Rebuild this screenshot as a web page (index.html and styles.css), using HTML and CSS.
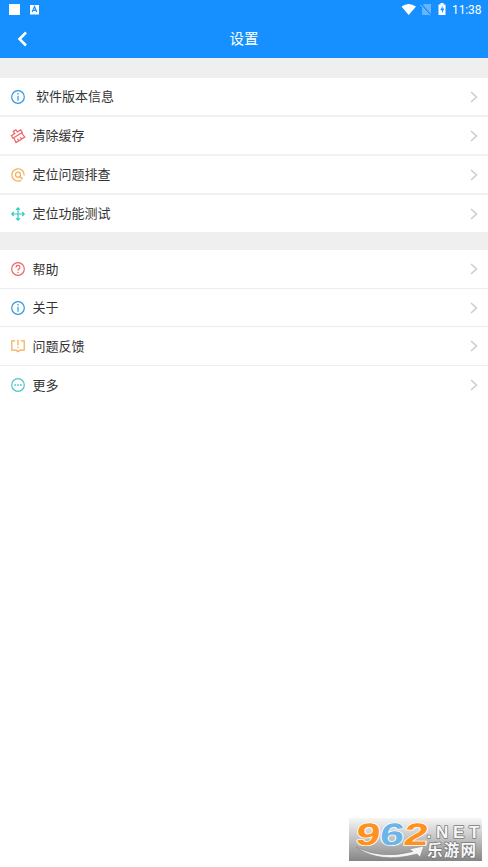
FILE: index.html
```html
<!DOCTYPE html>
<html lang="zh-CN">
<head>
<meta charset="utf-8">
<title>设置</title>
<link rel="stylesheet" href="styles.css">
</head>
<body>
<header class="header">
  <div class="status">
    <svg width="40" height="19" viewBox="0 0 40 19"><path fill="#fff" d="M9 4h11v11H9zM30 5h9v9.500h-9z"/><path d="M32.200 12l2.300-5.500 2.300 5.500M33 10.300h3" fill="none" stroke="#1690ff" stroke-width="1.200"/></svg>
    <div class="status-right">
      <svg width="48" height="19" viewBox="0 0 48 19"><path fill="#fff" d="M.5 6.500Q7.500 1.500 15 6.500L7.700 15z"/><path fill="#64b4ff" d="M23 4h7v11h-9V6z"/><path d="M19.500 4L30 15.500" stroke="#1690ff" stroke-width="2"/><path d="M19.500 5L29 15.500" stroke="#8bc8ff"/><path fill="#fff" d="M37.500 4.500h2V3h3v1.500h2V15h-7z"/><path d="M41.700 5.500l-2.500 4.700H41v3l2.300-4.600h-1.800z" fill="#1690ff"/></svg>
      <span class="time">11:38</span>
    </div>
  </div>
  <div class="titlebar">
    <svg class="back" width="12" height="16" viewBox="0 0 12 16"><path d="M10 1.500L3.500 8l6.500 6.500" fill="none" stroke="#fff" stroke-width="2.500"/></svg>
    <h1 class="title">设置</h1>
  </div>
</header>
<main>
  <section class="group thick">
    <div class="row wide">
      <svg class="icon blue" viewBox="0 0 14 14"><circle cx="7" cy="7" r="6.300"/><path d="M7 5.800v5M7 3v1.500"/></svg>
      <span class="label">软件版本信息</span>
      <svg class="arrow" viewBox="0 0 8 12"><path d="M1 1l5.500 5L1 11"/></svg>
    </div>
    <div class="row">
      <svg class="icon red" viewBox="0 0 14 14"><path transform="translate(-.5 -.8) rotate(-32 7 7)" d="M5.500 1.500h3v2.700h4v3h-11v-3h4zM2.500 7.200L1.800 12.500h10.400l-.7-5.300M5 12.500V10M8.500 12.500V10"/></svg>
      <span class="label">清除缓存</span>
      <svg class="arrow" viewBox="0 0 8 12"><path d="M1 1l5.500 5L1 11"/></svg>
    </div>
    <div class="row">
      <svg class="icon orange" viewBox="0 0 14 14"><path d="M10.200 12.300A6.200 6.200 0 1 1 13.200 7.500"/><circle cx="7" cy="6.700" r="2.500"/><path d="M8.800 8.500l3 2.700"/></svg>
      <span class="label">定位问题排查</span>
      <svg class="arrow" viewBox="0 0 8 12"><path d="M1 1l5.500 5L1 11"/></svg>
    </div>
    <div class="row">
      <svg class="icon teal" viewBox="0 0 14 14"><path d="M7 .8v12.400M.8 7h12.400M5 2.800l2-2 2 2M5 11.200l2 2 2-2M2.800 5l-2 2 2 2M11.200 5l2 2-2 2"/></svg>
      <span class="label">定位功能测试</span>
      <svg class="arrow" viewBox="0 0 8 12"><path d="M1 1l5.500 5L1 11"/></svg>
    </div>
  </section>
  <section class="group thin">
    <div class="row tall">
      <svg class="icon red" viewBox="0 0 14 14"><circle cx="7" cy="7" r="6.300"/><path d="M5 5.500C5 2.800 9 2.800 9 5.300 9 6.800 7 6.700 7 8.500M7 9.700v1.200"/></svg>
      <span class="label">帮助</span>
      <svg class="arrow" viewBox="0 0 8 12"><path d="M1 1l5.500 5L1 11"/></svg>
    </div>
    <div class="row">
      <svg class="icon blue" viewBox="0 0 14 14"><circle cx="7" cy="7" r="6.300"/><path d="M7 5.800v5M7 3v1.500"/></svg>
      <span class="label">关于</span>
      <svg class="arrow" viewBox="0 0 8 12"><path d="M1 1l5.500 5L1 11"/></svg>
    </div>
    <div class="row tall">
      <svg class="icon orange" viewBox="0 0 14 14"><path d="M4.200 1.800H.8v9.400h4.400L7 12.700l1.800-1.500h4.400V1.800H9.800M7 .8v5.700M7 7.800v1.400"/></svg>
      <span class="label">问题反馈</span>
      <svg class="arrow" viewBox="0 0 8 12"><path d="M1 1l5.500 5L1 11"/></svg>
    </div>
    <div class="row">
      <svg class="icon cyan" viewBox="0 0 14 14"><circle cx="7" cy="7" r="6.300"/><path d="M3.300 7h1.700M6.150 7h1.700M9 7h1.700" stroke-width="1.500"/></svg>
      <span class="label">更多</span>
      <svg class="arrow" viewBox="0 0 8 12"><path d="M1 1l5.500 5L1 11"/></svg>
    </div>
  </section>
</main>
<svg class="watermark" width="133" height="43" viewBox="0 0 133 43">
  <defs><linearGradient id="shade" x1="0" y1="0" x2="0" y2="1"><stop offset="0" stop-color="#f6f6f6"/><stop offset=".5" stop-color="#c0c0c0"/><stop offset="1" stop-color="#858585"/></linearGradient></defs>
  <path fill="url(#shade)" d="M0 0h133v43H0z"/>
  <path d="M7 29Q32 42 64 33.500L60 31 75 28 71 39 68 36Q30 46 7 29z" fill="#f5f5f5" stroke="#888" stroke-width=".6"/>
  <g class="digits" transform="translate(3.500 0) skewX(-8)"><text transform="translate(6 26.500) scale(1.400 1)" fill="#ff911e">9</text><text transform="translate(30 26.500) scale(1.400 1)" fill="#6bb5e8">6</text><text transform="translate(54 26.500) scale(1.400 1)" fill="#ff911e">2</text></g>
  <text class="net" x="77.500" y="19.500" textLength="53" lengthAdjust="spacing">.NET</text>
  <text class="site" x="78" y="38" textLength="49">乐游网</text>
</svg>
</body>
</html>
```
FILE: styles.css
```css
* { box-sizing: border-box; }
body {
  margin: 0;
  height: 867px;
  position: relative;
  overflow: hidden;
  background: #fff;
  color: #333;
  font-family: Roboto, "Noto Sans CJK SC", sans-serif;
}
svg { display: block; flex: none; }
.header { height: 58px; background: #1690ff; color: #fff; }
.status { display: flex; justify-content: space-between; height: 19px; }
.status-right { display: flex; gap: 3px; padding-right: 6px; }
.time { font-size: 12px; line-height: 20px; width: 30px; letter-spacing: -.1px; white-space: nowrap; }
.titlebar { display: grid; grid-template-columns: 40px 1fr 40px; align-items: center; height: 39px; }
.back { margin-left: 16px; }
.title { margin: 0; padding-top: 2px; text-align: center; font-size: 14.5px; font-weight: 400; line-height: 37px; }
.group { border-top: 18px solid #efefef; }
.group:first-child { border-top-width: 20px; }
.row {
  display: flex;
  align-items: center;
  height: 38px;
  padding: 0 10px 0 11px;
  border-bottom: 1px solid #ececec;
}
.thin .tall { height: 39px; }
.thick .row { height: 39px; border-bottom: 2px solid #f1f1f1; }
.thick .row:last-child { height: 37px; border-bottom: 0; }
.group:last-child .row:last-child { border-bottom: 0; }
.icon {
  width: 14px;
  height: 14px;
  margin-right: 7.500px;
  fill: none;
  stroke: currentColor;
  stroke-width: 1.200;
  overflow: visible;
}
.wide .icon { margin-right: 11px; }
.blue { color: #2d98df; }
.red { color: #ed6464; }
.orange { color: #f2ad55; }
.teal { color: #32cbc4; }
.cyan { color: #4bc5cc; }
.label { flex: 1; font-size: 13px; line-height: 20px; }
.thin .label { padding-top: 1px; }
.arrow { width: 8px; height: 12px; fill: none; stroke: #ccc; stroke-width: 1.500; }
.watermark { position: absolute; left: 349px; top: 818px; }
.watermark text { paint-order: stroke; stroke-linejoin: round; }
.digits { font: 700 31px "Liberation Sans", sans-serif; stroke: #fff; stroke-width: 1.500px; }
.net { font: 700 17px "Liberation Sans", sans-serif; fill: #f7f7f7; stroke: #777; stroke-width: 1.500px; }
.site { font: 700 15.5px "Noto Sans CJK SC", sans-serif; fill: #f7f7f7; stroke: #777; stroke-width: 1.500px; }
```
